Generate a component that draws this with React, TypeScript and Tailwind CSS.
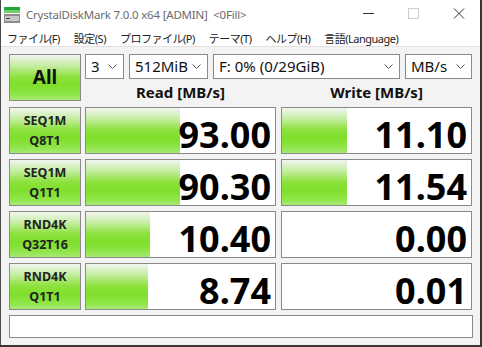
import React from 'react';

const green =
  'bg-[linear-gradient(to_bottom,#f2f4f0_0%,#c9eeaa_22%,#8fe240_48%,#7fdf2a_66%,#8de445_85%,#a6ea70_100%)]';

const Chevron = () => (
  <svg width="9" height="5" viewBox="0 0 9 5" className="shrink-0">
    <path d="M0.5 0.5 L4.5 4.5 L8.5 0.5" fill="none" stroke="#555" strokeWidth="1" />
  </svg>
);

const Combo = ({ w, text }: { w: string; text: string }) => (
  <div className={`${w} h-full bg-white border border-[#8a8a8a] flex items-center justify-between pl-[5px] pr-[6px] text-[15px] text-[#111]`}>
    <span className="leading-none">{text}</span>
    <Chevron />
  </div>
);

const rows = [
  { a: 'SEQ1M', b: 'Q8T1', read: '93.00', rw: 94, write: '11.10', ww: 65 },
  { a: 'SEQ1M', b: 'Q1T1', read: '90.30', rw: 94, write: '11.54', ww: 65 },
  { a: 'RND4K', b: 'Q32T16', read: '10.40', rw: 64, write: '0.00', ww: 0 },
  { a: 'RND4K', b: 'Q1T1', read: '8.74', rw: 62, write: '0.01', ww: 0 },
];

const menu = ['ファイル(F)', '設定(S)', 'プロファイル(P)', 'テーマ(T)', 'ヘルプ(H)', '言語(Language)'];

const Value = ({ value, bar }: { value: string; bar: number }) => (
  <div className="w-[191px] h-full bg-white border border-[#8a8a8a] relative">
    {bar > 0 && (
      <div className={`absolute left-0 top-0 bottom-0 ${green}`} style={{ width: bar }} />
    )}
    <div className="relative h-full flex items-center justify-end pr-[4px] pt-[9px] text-[36px] font-bold leading-none text-black">
      {value}
    </div>
  </div>
);

export default function App() {
  const font = { fontFamily: '"Noto Sans", "Noto Sans CJK JP", sans-serif' };
  return (
    <div className="w-[482px] h-[347px] bg-[#3b3633]" style={font}>
      <div className="w-[480px] h-[345px] bg-white border-l border-[#4a4a4a] flex flex-col">
        {/* title bar */}
        <div className="h-[30px] flex items-center relative">
          <svg width="16" height="16" viewBox="0 0 16 16" className="ml-[3px] mr-[6px]">
            <rect x="0" y="0" width="16" height="3" fill="#1fa53a" />
            <rect x="0" y="3" width="16" height="3" fill="#6fd06a" />
            <rect x="0" y="7" width="16" height="9" fill="#8c8c8c" />
            <rect x="1" y="9" width="14" height="5" fill="#c8c8c8" />
            <rect x="2" y="11" width="4" height="1" fill="#444" />
          </svg>
          <span className="text-[11.5px] tracking-[-0.2px] text-[#6b6b6b] leading-none">CrystalDiskMark 7.0.0 x64 [ADMIN]&nbsp; &lt;0Fill&gt;</span>
          <svg width="120" height="14" viewBox="0 0 120 14" className="absolute left-[356px] top-[7px]">
            <path d="M6 6.5 H17" stroke="#333" strokeWidth="1" />
            <rect x="51.5" y="1.5" width="10" height="10" fill="none" stroke="#ccc" />
            <path d="M97 1.5 L107 11.5 M107 1.5 L97 11.5" stroke="#333" strokeWidth="1" />
          </svg>
        </div>
        {/* menu */}
        <div className="h-[16px] flex items-center gap-[14px] pl-[6px] text-[11px] tracking-[-0.5px] text-[#222] leading-none whitespace-nowrap">
          {menu.map((m) => (
            <span key={m} className="shrink-0">{m}</span>
          ))}
        </div>
        {/* client */}
        <div className="flex-1 bg-[#f3f3f3] border-t border-[#e2e2e2] pl-[8px] pt-[7px] flex flex-col">
          <div className="flex h-[47px]">
            <div className={`w-[72px] h-full border border-[#8a8a8a] ${green} flex items-center justify-center text-[19px] font-bold text-[#111]`}>
              All
            </div>
            <div className="ml-[4px] w-[387px] flex flex-col">
              <div className="h-[25px] flex gap-[5px]">
                <Combo w="w-[39px]" text="3" />
                <Combo w="w-[79px]" text="512MiB" />
                <Combo w="w-[187px]" text="F: 0% (0/29GiB)" />
                <Combo w="w-[67px]" text="MB/s" />
              </div>
              <div className="flex-1 flex gap-[5px] text-[15px] font-bold text-[#111] leading-none">
                <div className="w-[191px] flex items-center justify-center pt-[4px]">Read [MB/s]</div>
                <div className="w-[191px] flex items-center justify-center pt-[4px]">Write [MB/s]</div>
              </div>
            </div>
          </div>
          <div className="mt-[6px] flex flex-col gap-[5px]">
            {rows.map((r, i) => (
              <div key={i} className="flex h-[47px]">
                <div className={`w-[72px] h-full border border-[#8a8a8a] ${green} flex flex-col items-center justify-center text-[12.5px] font-bold text-[#222] leading-[20px]`}>
                  <span>{r.a}</span>
                  <span>{r.b}</span>
                </div>
                <div className="ml-[4px] flex gap-[5px]">
                  <Value value={r.read} bar={r.rw} />
                  <Value value={r.write} bar={r.ww} />
                </div>
              </div>
            ))}
          </div>
          <div className="mt-[5px] w-[464px] h-[23px] bg-white border border-[#8a8a8a]" />
        </div>
      </div>
    </div>
  );
}
